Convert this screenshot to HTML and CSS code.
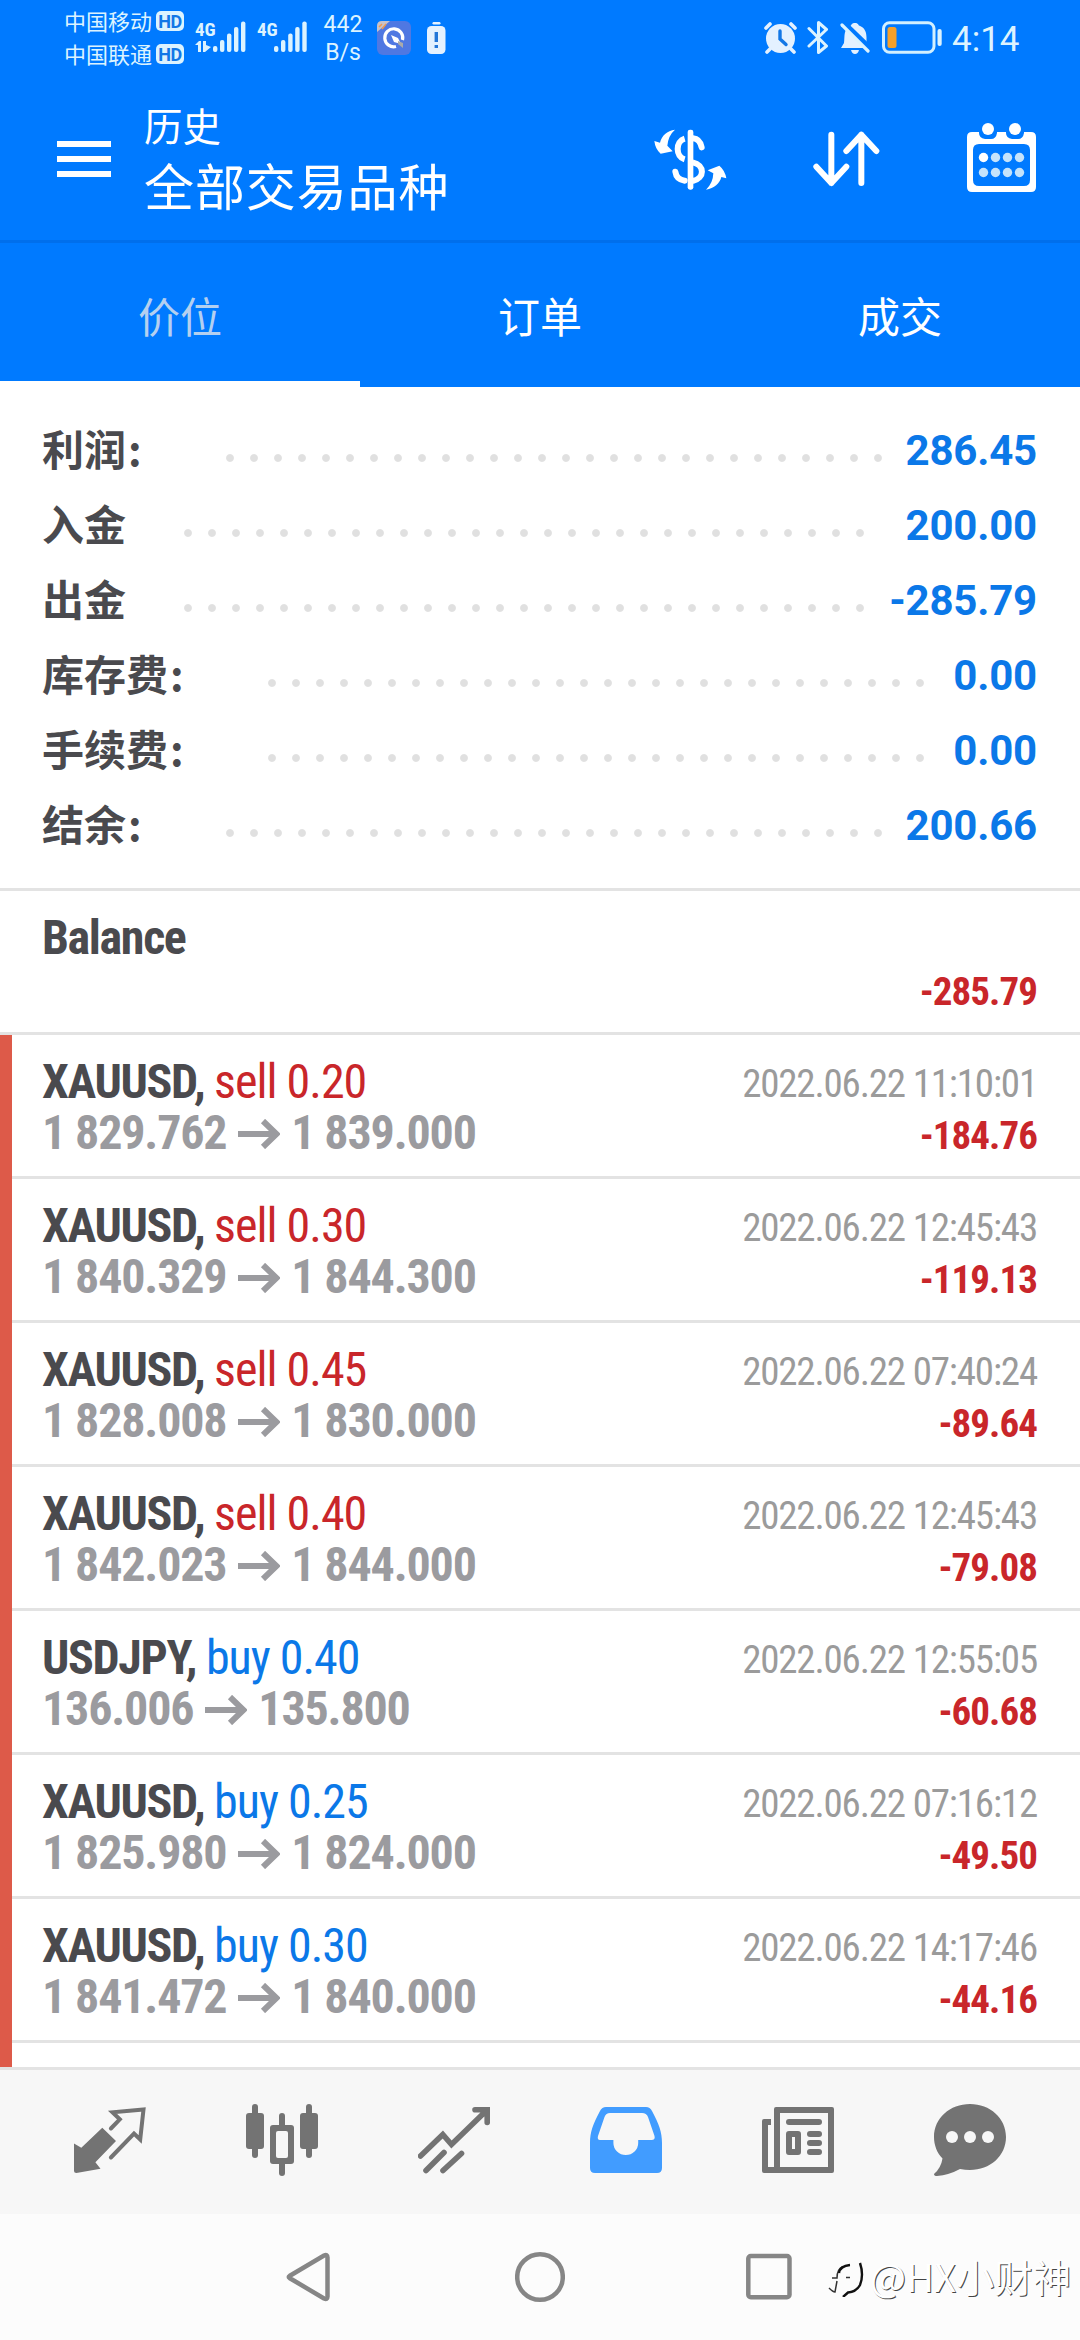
FILE: index.html
```
<!DOCTYPE html>
<html lang="zh-CN">
<head>
<meta charset="utf-8">
<title>历史</title>
<link rel="stylesheet" href="styles.css">
</head>
<body>
<div class="screen">
  <header class="header">
    <div class="status">
      <div class="carriers">
        <div class="carrier">中国移动<span class="hd">HD</span></div>
        <div class="carrier">中国联通<span class="hd">HD</span></div>
      </div>
      <svg class="signal" width="52" height="38" viewBox="0 -4 52 38" fill="#dcf3ff">
        <text class="signal-label" x="0" y="15">4G</text>
        <path d="M0 24l4-4h2v11H3v-7zM8 20h3v4l5 2-6 5H8z"/>
        <rect x="18" y="25" width="4.4" height="6" rx="2"/><rect x="25" y="19" width="4.4" height="12" rx="2"/><rect x="32" y="12.500" width="4.400" height="18.500" rx="2"/><rect x="39" y="6" width="4.400" height="25" rx="2"/><rect x="46" y="0.500" width="4.400" height="30.500" rx="2"/>
      </svg>
      <svg class="signal signal-two" width="52" height="38" viewBox="0 -4 52 38" fill="#dcf3ff">
        <text class="signal-label" x="0" y="15">4G</text>
        <rect x="17" y="25" width="4.4" height="6" rx="2"/><rect x="24" y="19" width="4.4" height="12" rx="2"/><rect x="31.200" y="12.500" width="4.400" height="18.500" rx="2"/><rect x="38.200" y="6" width="4.400" height="25" rx="2"/><rect x="45.300" y="0.500" width="4.400" height="30.500" rx="2"/>
      </svg>
      <div class="speed"><span>442</span><span>B/s</span></div>
      <svg class="app" width="34" height="34" viewBox="0 0 34 34">
        <rect width="34" height="34" rx="6" fill="#4f78e2"/>
        <path d="M0 11V5Q0 0 5 0H13Z" fill="#c7c2c8"/>
        <path d="M2 6L5 3M5 8L9 3" stroke="#ee9b52" stroke-width="1.500"/>
        <path d="M19 25.500A9 9 0 1 1 25.500 19" fill="none" stroke="#fff" stroke-width="3.200"/>
        <path d="M14 14l7 3 3 6-7-2z" fill="#fff"/><path d="M21 20l5 2v5l-5-4z" fill="#aaa"/>
      </svg>
      <svg class="cell" width="19" height="33" viewBox="0 0 19 33">
        <rect x="5.500" y="0" width="8" height="2.400" rx="1.200" fill="#e4f1ff"/>
        <rect x="0" y="4" width="18.500" height="28" rx="4.500" fill="#e4f1ff"/>
        <path d="M9.300 10v10M9.300 23v3" stroke="#2376d8" stroke-width="3.400"/>
      </svg>
      <svg class="alarm" width="34" height="33" viewBox="0 0 34 33">
        <circle cx="16.500" cy="16.500" r="14.500" fill="#e4f1ff"/>
        <path d="M2 6l4-4M27 2l4 4M6 27l-3 3M27 27l3 3" stroke="#e4f1ff" stroke-width="3.600" stroke-linecap="round"/>
        <path d="M16 9v8l6 5.500" fill="none" stroke="#1377e6" stroke-width="3.400" stroke-linecap="round"/>
      </svg>
      <svg class="bt" width="22" height="35" viewBox="0 0 22 35" fill="none" stroke="#dcf3ff" stroke-width="3" stroke-linejoin="round" stroke-linecap="round">
        <path d="M2 8.500L19.500 26 11.500 32.500V2.500L19.500 9.500 2 26"/>
      </svg>
      <svg class="bell" width="31" height="33" viewBox="0 0 31 33">
        <path d="M15 1c3 0 3.500 2 4 2.500 6 2 7.500 7 7.500 12V22l3 4H1l3-5c1-7-1-14 7-17.500C11.500 2.500 12 1 15 1z" fill="#e4f1ff"/>
        <path d="M11 28h8q-1 4-4 4t-4-4z" fill="#e4f1ff"/>
        <path d="M1 -2l32 31" stroke="#007aff" stroke-width="5"/>
        <path d="M2 3l26 26" stroke="#dcf3ff" stroke-width="3.200" stroke-linecap="round"/>
      </svg>
      <svg class="battery" width="61" height="34" viewBox="0 0 61 34">
        <rect x="1.500" y="1.800" width="50.500" height="29.500" rx="6" fill="none" stroke="#d2f0ff" stroke-width="3"/>
        <rect x="55.500" y="8" width="4.200" height="17" rx="2" fill="#dcf3ff"/>
        <rect x="5.500" y="6" width="9" height="21" rx="2.500" fill="#f5a02a"/>
      </svg>
      <span class="clock">4:14</span>
    </div>
    <div class="appbar">
      <div class="menu"><i></i><i></i><i></i></div>
      <div class="titles"><div class="sub">历史</div><div class="main">全部交易品种</div></div>
      <svg class="dollar" width="73" height="62" viewBox="41 55 219 186">
        <g fill="none" stroke="#fff" stroke-width="18">
          <path d="M133 84C105 92 105 138 133 146"/><path d="M158 83C172 84 180 92 184 110" stroke-linecap="round"/>
          <path d="M105 183C107 198 116 208 133 210" stroke-linecap="round"/><path d="M157 155C194 163 194 203 157 211"/>
        </g>
        <rect x="142" y="57" width="17" height="180" rx="7" fill="#fff"/>
        <path d="M104 57C80 60 64 75 59 96L42 91Q45 116 61 129L97 122 81 105Q84 74 104 57zM197 237C222 233 238 219 243 199L258 203Q254 179 237 165L202 179 219 188Q218 218 197 237z" fill="#fff"/>
      </svg>
      <svg class="sort" width="68" height="58" viewBox="518 63 204 174" fill="none" stroke="#fff" stroke-width="18" stroke-linecap="round" stroke-linejoin="round">
        <path d="M573 74V219M528 170L573 219 618 170M663 219V74M618 123L663 74 708 123"/>
      </svg>
      <svg class="cal" width="70" height="70" viewBox="0 0 70 70">
        <path fill="#fff" fill-rule="evenodd" d="M5 9H64Q69 9 69 14V64Q69 69 64 69H5Q0 69 0 64V14Q0 9 5 9zM12 21Q6 21 6 27V57Q6 63 12 63H57Q63 63 63 57V27Q63 21 57 21z"/>
        <path d="M12 8h18v2q-1 6-6 6h-6q-6-1-6-6zM39 8h18v2q-1 6-6 6h-6q-6-1-6-6z" fill="#007aff"/>
        <g fill="#fff"><circle cx="21" cy="6" r="6"/><circle cx="48" cy="6" r="6"/><circle cx="16.500" cy="34.500" r="4.700"/></g>
        <g fill="#c5e3fb"><circle cx="28.500" cy="34.500" r="4.700"/><circle cx="40.500" cy="34.500" r="4.700"/><circle cx="52.500" cy="34.500" r="4.700"/><circle cx="16.500" cy="49.500" r="4.700"/><circle cx="28.500" cy="49.500" r="4.700"/><circle cx="40.500" cy="49.500" r="4.700"/><circle cx="52.500" cy="49.500" r="4.700"/></g>
      </svg>
    </div>
    <nav class="tabs"><div class="tab active">价位</div><div class="tab">订单</div><div class="tab">成交</div></nav>
  </header>

  <section class="summary">
    <div class="sum"><span class="label mid">利润<span class="colon">:</span></span><span class="dots n28"></span><span class="val">286.45</span></div>
    <div class="sum"><span class="label short">入金</span><span class="dots n29"></span><span class="val">200.00</span></div>
    <div class="sum"><span class="label short">出金</span><span class="dots n29"></span><span class="val">-285.79</span></div>
    <div class="sum"><span class="label long">库存费<span class="colon">:</span></span><span class="dots n28"></span><span class="val">0.00</span></div>
    <div class="sum"><span class="label long">手续费<span class="colon">:</span></span><span class="dots n28"></span><span class="val">0.00</span></div>
    <div class="sum"><span class="label mid">结余<span class="colon">:</span></span><span class="dots n28"></span><span class="val">200.66</span></div>
  </section>

  <main class="list">
    <article class="deal balance"><div class="left"><div class="sym">Balance</div></div><div class="right"><div class="date"></div><div class="amt">-285.79</div></div></article>
    <div class="deals">
      <article class="deal"><div class="left"><div class="sym">XAUUSD, <span class="sell">sell 0.20</span></div><div class="price">1 829.762 <svg class="arrow" viewBox="0 0 42 30"><path d="M0 15H38M25 2L38.500 15 25 28"/></svg> 1 839.000</div></div><div class="right"><div class="date">2022.06.22 11:10:01</div><div class="amt">-184.76</div></div></article>
      <article class="deal"><div class="left"><div class="sym">XAUUSD, <span class="sell">sell 0.30</span></div><div class="price">1 840.329 <svg class="arrow" viewBox="0 0 42 30"><path d="M0 15H38M25 2L38.500 15 25 28"/></svg> 1 844.300</div></div><div class="right"><div class="date">2022.06.22 12:45:43</div><div class="amt">-119.13</div></div></article>
      <article class="deal"><div class="left"><div class="sym">XAUUSD, <span class="sell">sell 0.45</span></div><div class="price">1 828.008 <svg class="arrow" viewBox="0 0 42 30"><path d="M0 15H38M25 2L38.500 15 25 28"/></svg> 1 830.000</div></div><div class="right"><div class="date">2022.06.22 07:40:24</div><div class="amt">-89.64</div></div></article>
      <article class="deal"><div class="left"><div class="sym">XAUUSD, <span class="sell">sell 0.40</span></div><div class="price">1 842.023 <svg class="arrow" viewBox="0 0 42 30"><path d="M0 15H38M25 2L38.500 15 25 28"/></svg> 1 844.000</div></div><div class="right"><div class="date">2022.06.22 12:45:43</div><div class="amt">-79.08</div></div></article>
      <article class="deal"><div class="left"><div class="sym">USDJPY, <span class="buy">buy 0.40</span></div><div class="price">136.006 <svg class="arrow" viewBox="0 0 42 30"><path d="M0 15H38M25 2L38.500 15 25 28"/></svg> 135.800</div></div><div class="right"><div class="date">2022.06.22 12:55:05</div><div class="amt">-60.68</div></div></article>
      <article class="deal"><div class="left"><div class="sym">XAUUSD, <span class="buy">buy 0.25</span></div><div class="price">1 825.980 <svg class="arrow" viewBox="0 0 42 30"><path d="M0 15H38M25 2L38.500 15 25 28"/></svg> 1 824.000</div></div><div class="right"><div class="date">2022.06.22 07:16:12</div><div class="amt">-49.50</div></div></article>
      <article class="deal"><div class="left"><div class="sym">XAUUSD, <span class="buy">buy 0.30</span></div><div class="price">1 841.472 <svg class="arrow" viewBox="0 0 42 30"><path d="M0 15H38M25 2L38.500 15 25 28"/></svg> 1 840.000</div></div><div class="right"><div class="date">2022.06.22 14:17:46</div><div class="amt">-44.16</div></div></article>
    </div>
  </main>

  <nav class="bottom">
    <svg viewBox="0 0 72 72"><path d="M0 39.500L7.300 43.700 28.300 23.700 42 37 21.400 58.300 26.500 64.700 2.400 69Q0 69 0 67z"/><path d="M36.900 24.500L45.800 15.300 38.500 8.300 69.500 5.500 66.200 35.500 60 29.500 36.900 53.500" fill="none" stroke="#737373" stroke-width="4" stroke-linecap="round"/></svg>
    <svg viewBox="0 0 72 72"><rect x="6" width="6" height="54" rx="3"/><rect y="9" width="18" height="36" rx="3"/><rect x="60" width="6" height="54" rx="3"/><rect x="54" y="9" width="18" height="36" rx="3"/><rect x="33" y="9" width="6" height="63" rx="3"/><rect x="24" y="21" width="24" height="39" rx="3"/><rect x="30" y="27" width="12" height="27" rx="2" fill="#f7f7f7"/></svg>
    <svg viewBox="0 0 72 72" fill="none" stroke="#737373" stroke-width="5.600" stroke-linecap="round"><path d="M2.500 52L24.800 30.500 33.500 40.500 68.500 6.500M57 5.800H69.200V18.500M8 66.500L26 48.500M25 66.500L43.500 49.500"/></svg>
    <svg viewBox="0 0 72 72" fill="#419cff"><path fill-rule="evenodd" d="M16 3H56Q60 3 62 7C69 20 72 28 72 39V64Q72 69 67 69H5Q0 69 0 64V39C0 28 3 20 10 7Q12 3 16 3zM20 9Q16 9 14.500 13L8 32Q7 36 10 36H23.400V39A12.400 12 0 0 0 48.200 39V36H61.500Q65.500 36 64.500 32L58 13Q56.500 9 52 9z"/></svg>
    <svg viewBox="0 0 72 72"><path fill-rule="evenodd" d="M14 3H70Q72 3 72 5V67Q72 69 70 69H2Q0 69 0 67V17Q0 15 2 15H9V21H6V63H12V5Q12 3 14 3zM18 9V63H66V9z"/><rect x="24" y="15" width="36" height="6" rx="3"/><path fill-rule="evenodd" d="M27 27H36Q39 27 39 30V48Q39 51 36 51H27Q24 51 24 48V30Q24 27 27 27zM30 33V45H33V33z"/><rect x="45" y="27" width="15" height="6" rx="3"/><rect x="45" y="36" width="15" height="6" rx="3"/><rect x="45" y="45" width="15" height="6" rx="3"/></svg>
    <svg viewBox="0 0 72 72"><path d="M36 0C56 0 72 14 72 33S56 66 36 66Q31 66 26 65Q15 71 3 72 0 72 0 70 7 64 8.500 54.500C3 49 0 41 0 33 0 14 16 0 36 0z"/><g fill="#f7f7f7"><circle cx="18" cy="33" r="6"/><circle cx="36" cy="33" r="6"/><circle cx="54" cy="33" r="6"/></g></svg>
  </nav>

  <footer class="system">
    <svg width="46" height="52" viewBox="0 0 46 52"><path d="M3.500 25Q2 26 3.500 27L38 47.500Q41.500 49 41.500 45.500V6.500Q41.500 3 38 4.500z"/></svg>
    <svg width="50" height="52" viewBox="0 0 50 52"><circle cx="25" cy="26" r="22.800"/></svg>
    <svg width="46" height="52" viewBox="0 0 46 52"><rect x="2.300" y="5" width="41.200" height="41.200" rx="2.500"/></svg>
    <div class="mark">
      <svg width="40" height="42" viewBox="0 0 40 42"><path class="thin" d="M3 33Q7 37 9 37L11 26M6 23h5Q11 14 17 11.500M20 22.500h4"/><path class="thick" d="M13 18Q14 11 24 10M34 8Q38 20 34 30 30 37 22 37.500L17 42"/></svg>
      <span>@HX小财神</span>
    </div>
  </footer>
</div>
</body>
</html>
```
FILE: styles.css
```
* { box-sizing: border-box; }
body { margin: 0; font-family: Roboto, "Noto Sans CJK SC", sans-serif; }
svg { display: block; flex: none; }
.screen { width: 1080px; height: 2340px; display: flex; flex-direction: column; background: #fff; overflow: hidden; }

.header { height: 387px; flex: none; background: #007aff; color: #fff; }
.status { height: 75px; display: flex; align-items: flex-start; padding: 4px 0 0 64px; color: #dcf3ff; }
.carriers { width: 120px; }
.carrier { height: 33px; display: flex; align-items: center; justify-content: space-between; font-family: "Noto Sans CJK SC", sans-serif; font-size: 22px; line-height: 33px; white-space: nowrap; }
.hd { width: 28px; height: 20px; border-radius: 5px; background: #dcf3ff; color: #1377e6; font: 700 18px/21px Roboto, sans-serif; text-align: center; letter-spacing: -.5px; }
.signal { margin: 13px 0 0 11px; }
.signal-two { margin-left: 10px; }
.signal-label { font: 700 19px "Roboto Condensed", sans-serif; }
.speed { margin: 7px 0 0 10px; width: 48px; display: flex; flex-direction: column; text-align: center; font-size: 23px; line-height: 28px; }
.app { margin: 17px 0 0 10px; }
.cell { margin: 18px 0 0 16px; }
.alarm { margin: 18px 0 0 318px; }
.bt { margin: 16px 0 0 9px; }
.bell { margin: 18px 0 0 11px; }
.battery { margin: 17px 0 0 11px; }
.clock { margin: 14px 0 0 9px; font-size: 35px; line-height: 44px; }

.appbar { height: 168px; display: flex; align-items: flex-start; padding-left: 57px; border-bottom: 3px solid #006fec; }
.menu { width: 54px; height: 36px; margin-top: 66px; display: flex; flex-direction: column; justify-content: space-between; }
.menu i { height: 6px; background: #fff; }
.titles { margin: 22px 0 0 33px; width: 510px; font-family: "Noto Sans CJK SC", sans-serif; white-space: nowrap; }
.sub { font-size: 38.500px; line-height: 54px; }
.main { font-size: 50px; line-height: 67px; letter-spacing: .9px; }
.dollar { margin-top: 54px; }
.sort { margin: 56px 0 0 86px; }
.cal { margin: 48px 0 0 86px; }
.tabs { display: flex; height: 144px; }
.tab { flex: 1; text-align: center; font: 42px/143px "Noto Sans CJK SC", sans-serif; }
.active { color: #b4d0f0; border-bottom: 6px solid #fff; }

.summary { height: 501px; flex: none; padding: 26px 43px 0 42px; }
.sum { height: 75px; display: flex; align-items: center; }
.label { height: 75px; font: 700 42px/69px "Noto Sans CJK SC", sans-serif; color: #4a4a4e; white-space: nowrap; }
.colon { padding-left: 2px; }
.short { width: 134px; }
.mid { width: 176px; }
.long { width: 218px; }
.dots { height: 24px; margin-top: 15px; background: radial-gradient(circle, #e0e0e0 3.400px, transparent 4.400px) 0 0 / 24px 24px; }
.n28 { width: 672px; }
.n29 { width: 696px; }
.val { flex: 1; font-size: 42px; font-weight: 700; letter-spacing: -.2px; color: #0b78e8; white-space: nowrap; display: flex; justify-content: flex-end; }

.list { flex: none; height: 1179px; overflow: hidden; border-top: 3px solid #e3e3e3; }
.deal { height: 144px; display: flex; justify-content: space-between; border-bottom: 3px solid #e3e3e3; padding: 21px 43px 0 30px; font-family: "Roboto Condensed", sans-serif; white-space: nowrap; }
.balance { padding-left: 42px; }
.deals { border-left: 12px solid #dd5a49; height: 1032px; }
.sym { font-size: 48px; font-weight: 700; line-height: 51px; color: #4a4a4e; letter-spacing: -1.350px; }
.sym span { font-weight: 400; letter-spacing: -1px; }
.sell { color: #c9262a; }
.buy { color: #0b78e8; }
.price { font-size: 48px; font-weight: 700; line-height: 51px; color: #9b9b9f; letter-spacing: -1.150px; }
.arrow { display: inline-block; width: 42px; height: 30px; margin: 0 1px 0 2px; fill: none; stroke: #9b9b9f; stroke-width: 6; }
.right { text-align: right; }
.date { height: 51px; padding-top: 3px; font-size: 39px; line-height: 51px; letter-spacing: -1.180px; color: #9b9b9b; }
.amt { padding-top: 4px; font-size: 39px; font-weight: 700; line-height: 51px; letter-spacing: -.950px; color: #c9262a; }

.bottom { height: 147px; flex: none; display: flex; justify-content: space-around; padding: 34px 24px 0; border-top: 3px solid #e3e3e3; background: #f7f7f7; }
.bottom svg { width: 72px; height: 72px; fill: #737373; }
.bottom svg[fill="none"] { fill: none; }
.bottom svg[fill="#419cff"] { fill: #419cff; }

.system { position: relative; flex: 1; display: flex; align-items: flex-start; padding: 37px 0 0 286px; background: #fcfcfc; }
.system svg { fill: none; stroke: #868686; stroke-width: 4.500; }
.system > svg + svg { margin-left: 183px; }
.system > svg + svg + svg { margin-left: 181px; }
.mark { position: absolute; left: 826px; top: 35px; display: flex; align-items: center; color: #fff; font: 38px/54px "Noto Sans CJK SC", sans-serif; text-shadow: 1px 1px 0 #444; letter-spacing: .3px; white-space: nowrap; }
.mark span { margin-left: 4px; }
.mark .thin { stroke: #333; stroke-width: 1.500; }
.mark .thick { stroke: #111; stroke-width: 2.400; }
```
